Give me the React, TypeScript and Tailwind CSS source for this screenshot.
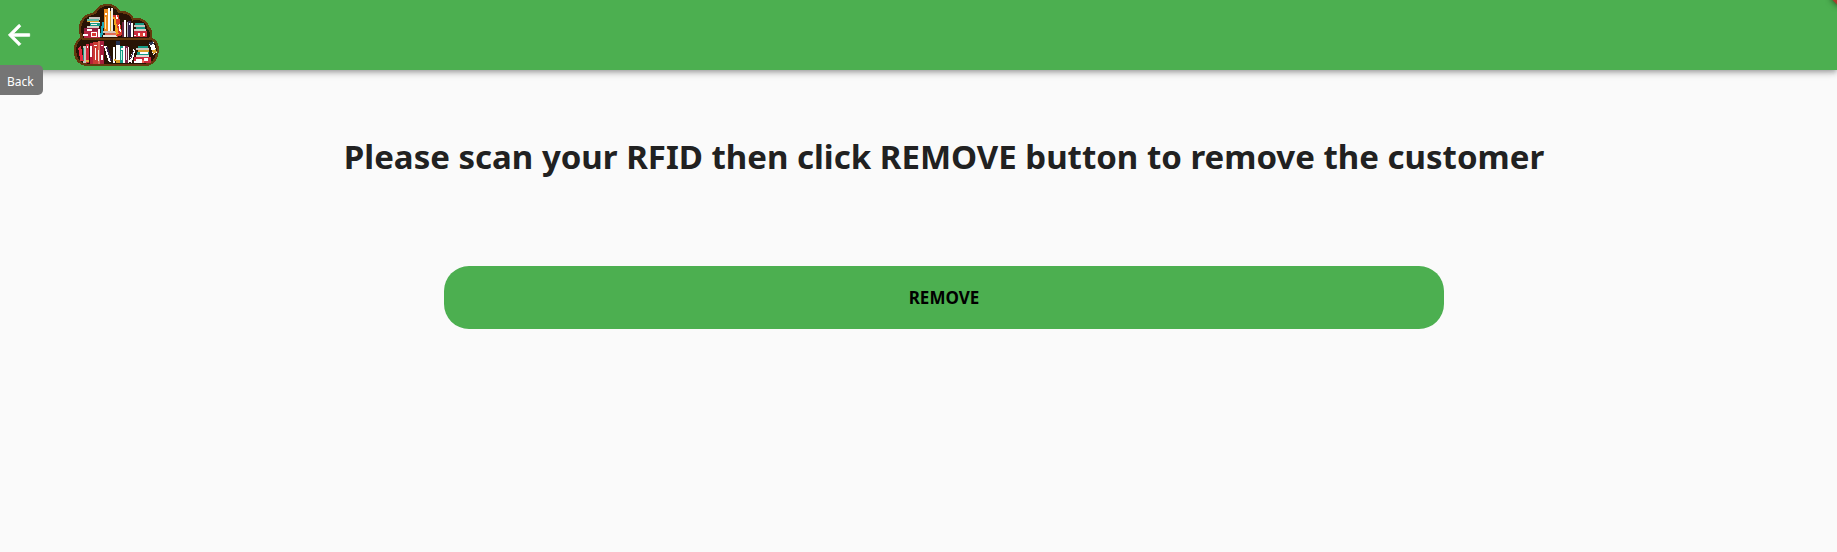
const books: [number, number, number, number, string][] = [
  // upper shelf, left stack
  [268, 51, 31, 8, "#c9c3bd"], [262, 58, 36, 7, "#5fb8a8"], [262, 63, 36, 3, "#d9a02c"], [270, 66, 29, 3, "#f5f1ea"],
  [270, 69, 29, 9, "#149a86"], [274, 71, 18, 4, "#f5f1ea"], [262, 78, 34, 5, "#d8d0c8"], [252, 84, 46, 9, "#8d1f3e"],
  [252, 93, 48, 20, "#b52742"], [262, 87, 14, 5, "#ffffff"], [272, 96, 20, 15, "#ffffff"],
  [276, 99, 12, 10, "#d93a32"], [250, 103, 14, 5, "#ffffff"], [294, 87, 5, 24, "#ffffff"],
  // upper shelf, tall books
  [313, 28, 11, 64, "#ee8a1d"], [315, 38, 7, 7, "#ffffff"], [316, 52, 3, 34, "#ffe3a5"],
  [324, 24, 7, 70, "#ffffff"], [331, 34, 3, 58, "#d9a02c"], [334, 24, 6, 70, "#f4ecdf"],
  [310, 94, 40, 6, "#d9c5b8"], [316, 100, 38, 5, "#e36b55"], [308, 106, 46, 6, "#e8e2da"],
  // upper shelf, right group
  [366, 66, 5, 46, "#6b2342"], [371, 60, 7, 52, "#ffffff"], [380, 66, 3, 44, "#b8aec0"],
  [384, 62, 9, 50, "#35234f"], [386, 70, 5, 6, "#ffffff"], [394, 68, 4, 44, "#ffffff"],
  [405, 69, 27, 5, "#149a86"], [402, 75, 32, 6, "#c6c0b9"], [407, 82, 27, 5, "#149a86"],
  [402, 87, 36, 5, "#d8d0c8"], [402, 94, 38, 17, "#c92b3e"], [414, 98, 20, 9, "#ffffff"],
  [420, 99, 9, 11, "#df4038"], [402, 104, 7, 4, "#ffffff"],
  // lower shelf, left
  [249, 137, 8, 52, "#c9c3bd"], [258, 132, 10, 58, "#cf263a"], [260, 137, 5, 7, "#ffffff"],
  [249, 144, 4, 40, "#149a86"], [258, 179, 8, 6, "#ddb13a"], [269, 130, 10, 61, "#b42038"], [271, 139, 4, 33, "#ffffff"],
  [280, 127, 13, 64, "#cb3b34"], [282, 134, 8, 5, "#ffffff"], [285, 144, 3, 36, "#ffffff"],
  [293, 124, 8, 67, "#dd6a58"], [294, 150, 4, 34, "#f5eee6"], [301, 124, 11, 67, "#a51e3c"], [303, 134, 5, 5, "#ffffff"],
  [304, 164, 5, 17, "#ffffff"],
  // lower shelf, middle
  [339, 142, 7, 48, "#ffffff"], [341, 178, 7, 6, "#e2a92c"], [347, 124, 12, 10, "#283352"],
  [347, 134, 12, 48, "#ffffff"], [347, 180, 12, 10, "#d9a02c"], [360, 137, 10, 53, "#149a86"],
  [362, 144, 6, 5, "#ffffff"], [363, 154, 3, 26, "#c9f1e5"], [370, 137, 4, 53, "#ffffff"],
  [375, 138, 9, 52, "#7a2145"], [378, 144, 3, 36, "#eadbe2"], [384, 141, 4, 49, "#ffffff"],
  // lower shelf, right stack
  [413, 137, 31, 6, "#149a86"], [409, 144, 37, 6, "#c9c3bd"], [414, 151, 32, 5, "#d9a02c"],
  [410, 156, 38, 9, "#149a86"], [420, 157, 24, 5, "#ffffff"], [409, 165, 39, 5, "#e0dcd3"],
  [402, 171, 50, 19, "#c92b3e"], [409, 178, 18, 10, "#ffffff"], [432, 174, 12, 8, "#ffffff"],
  [426, 180, 6, 10, "#ef6255"], [402, 183, 7, 5, "#ffffff"],
];

const slanted: [string, string][] = [
  ["306,66 313,67 307,110 300,110", "#1aa5b5"],
  ["340,46 356,44 367,104 350,112", "#d9362b"],
  ["340,52 345,50 356,101 348,105", "#f4a51d"],
  ["347,47 351,46 354,58 350,59", "#ffffff"],
  ["355,74 359,73 363,95 359,96", "#ffffff"],
  ["312,140 320,137 335,184 327,188", "#ffffff"],
  ["318,141 322,139 336,180 332,183", "#382451"],
  ["387,184 400,148 406,151 395,190", "#ffffff"],
  ["390,177 399,151 402,153 393,180", "#33244c"],
  ["446,128 459,123 471,157 460,164", "#ffffff"],
  ["447,128 459,123 461,132 450,136", "#283352"],
  ["456,152 468,148 471,156 460,162", "#d9a02c"],
];

const cloud =
  "M246 112 C232 85 242 47 278 42 C291 40 289 22 309 17 C330 9 349 20 358 37 C379 35 393 43 399 58 C424 53 442 66 444 83 C455 91 455 102 451 114 C469 122 477 140 472 158 C470 180 454 195 436 194 L260 194 C239 193 226 177 226 158 C223 139 231 122 246 112 Z";

function BookshelfLogo() {
  return (
    <svg viewBox="222 12 255 186" className="h-[62px] w-[85px]" role="img" aria-label="Bookshelf" shapeRendering="crispEdges">
      <path d={cloud} fill="#281305" stroke="#65390d" strokeWidth="7" />
      <path d="M246 117 H452" stroke="#65390d" strokeWidth="6" />
      {books.map(([x, y, w, h, fill], i) => (
        <rect key={i} x={x} y={y} width={w} height={h} fill={fill} />
      ))}
      <path d="M235 145 L243 137 L251 184 L241 184 Z" fill="#e1273e" />
      {slanted.map(([points, fill], i) => (
        <polygon key={i} points={points} fill={fill} />
      ))}
    </svg>
  );
}

export default function App() {
  return (
    <div className="min-h-screen overflow-hidden bg-[#fafafa] font-['Segoe_UI','Noto_Sans',sans-serif] text-[#212121]">
      <header className="relative flex h-[70px] items-center bg-[#4caf50] shadow-[0_2px_4px_-1px_rgba(0,0,0,0.2),0_4px_5px_rgba(0,0,0,0.14),0_1px_10px_rgba(0,0,0,0.12)]">
        <div className="relative w-[74px]">
          <button type="button" aria-label="Back" aria-describedby="back-tip" className="flex h-10 w-[38px] items-center justify-center text-white">
            <svg viewBox="0 0 24 24" className="h-8 w-8" fill="currentColor" stroke="currentColor" strokeWidth="0.6" aria-hidden="true">
              <path d="M20 11H7.83l5.59-5.59L12 4l-8 8 8 8 1.41-1.41L7.83 13H20v-2z" />
            </svg>
          </button>
          <div id="back-tip" role="tooltip" className="absolute top-[50px] left-0 flex h-[30px] w-[43px] items-center rounded-r-[5px] bg-[#757575] pt-[3px] pl-[7px] text-xs text-white">
            Back
          </div>
        </div>
        <BookshelfLogo />
        <div className="absolute top-0 right-0 h-3 w-3 overflow-hidden">
          <div className="absolute -top-2 -right-2 h-3 w-3 rotate-45 bg-[#a5402c] shadow-[0_0_6px_rgba(0,0,0,0.6)]" />
        </div>
      </header>
      <main className="flex flex-col items-center pt-[62px] pl-[51px]">
        <h1 className="text-center text-[33px] leading-[50px] font-bold">
          Please scan your RFID then click REMOVE button to remove the customer
        </h1>
        <button type="button" className="mt-[84px] h-[63px] w-full max-w-[1000px] rounded-[25px] bg-[#4caf50] text-[17px] font-bold text-black">
          REMOVE
        </button>
      </main>
    </div>
  );
}
